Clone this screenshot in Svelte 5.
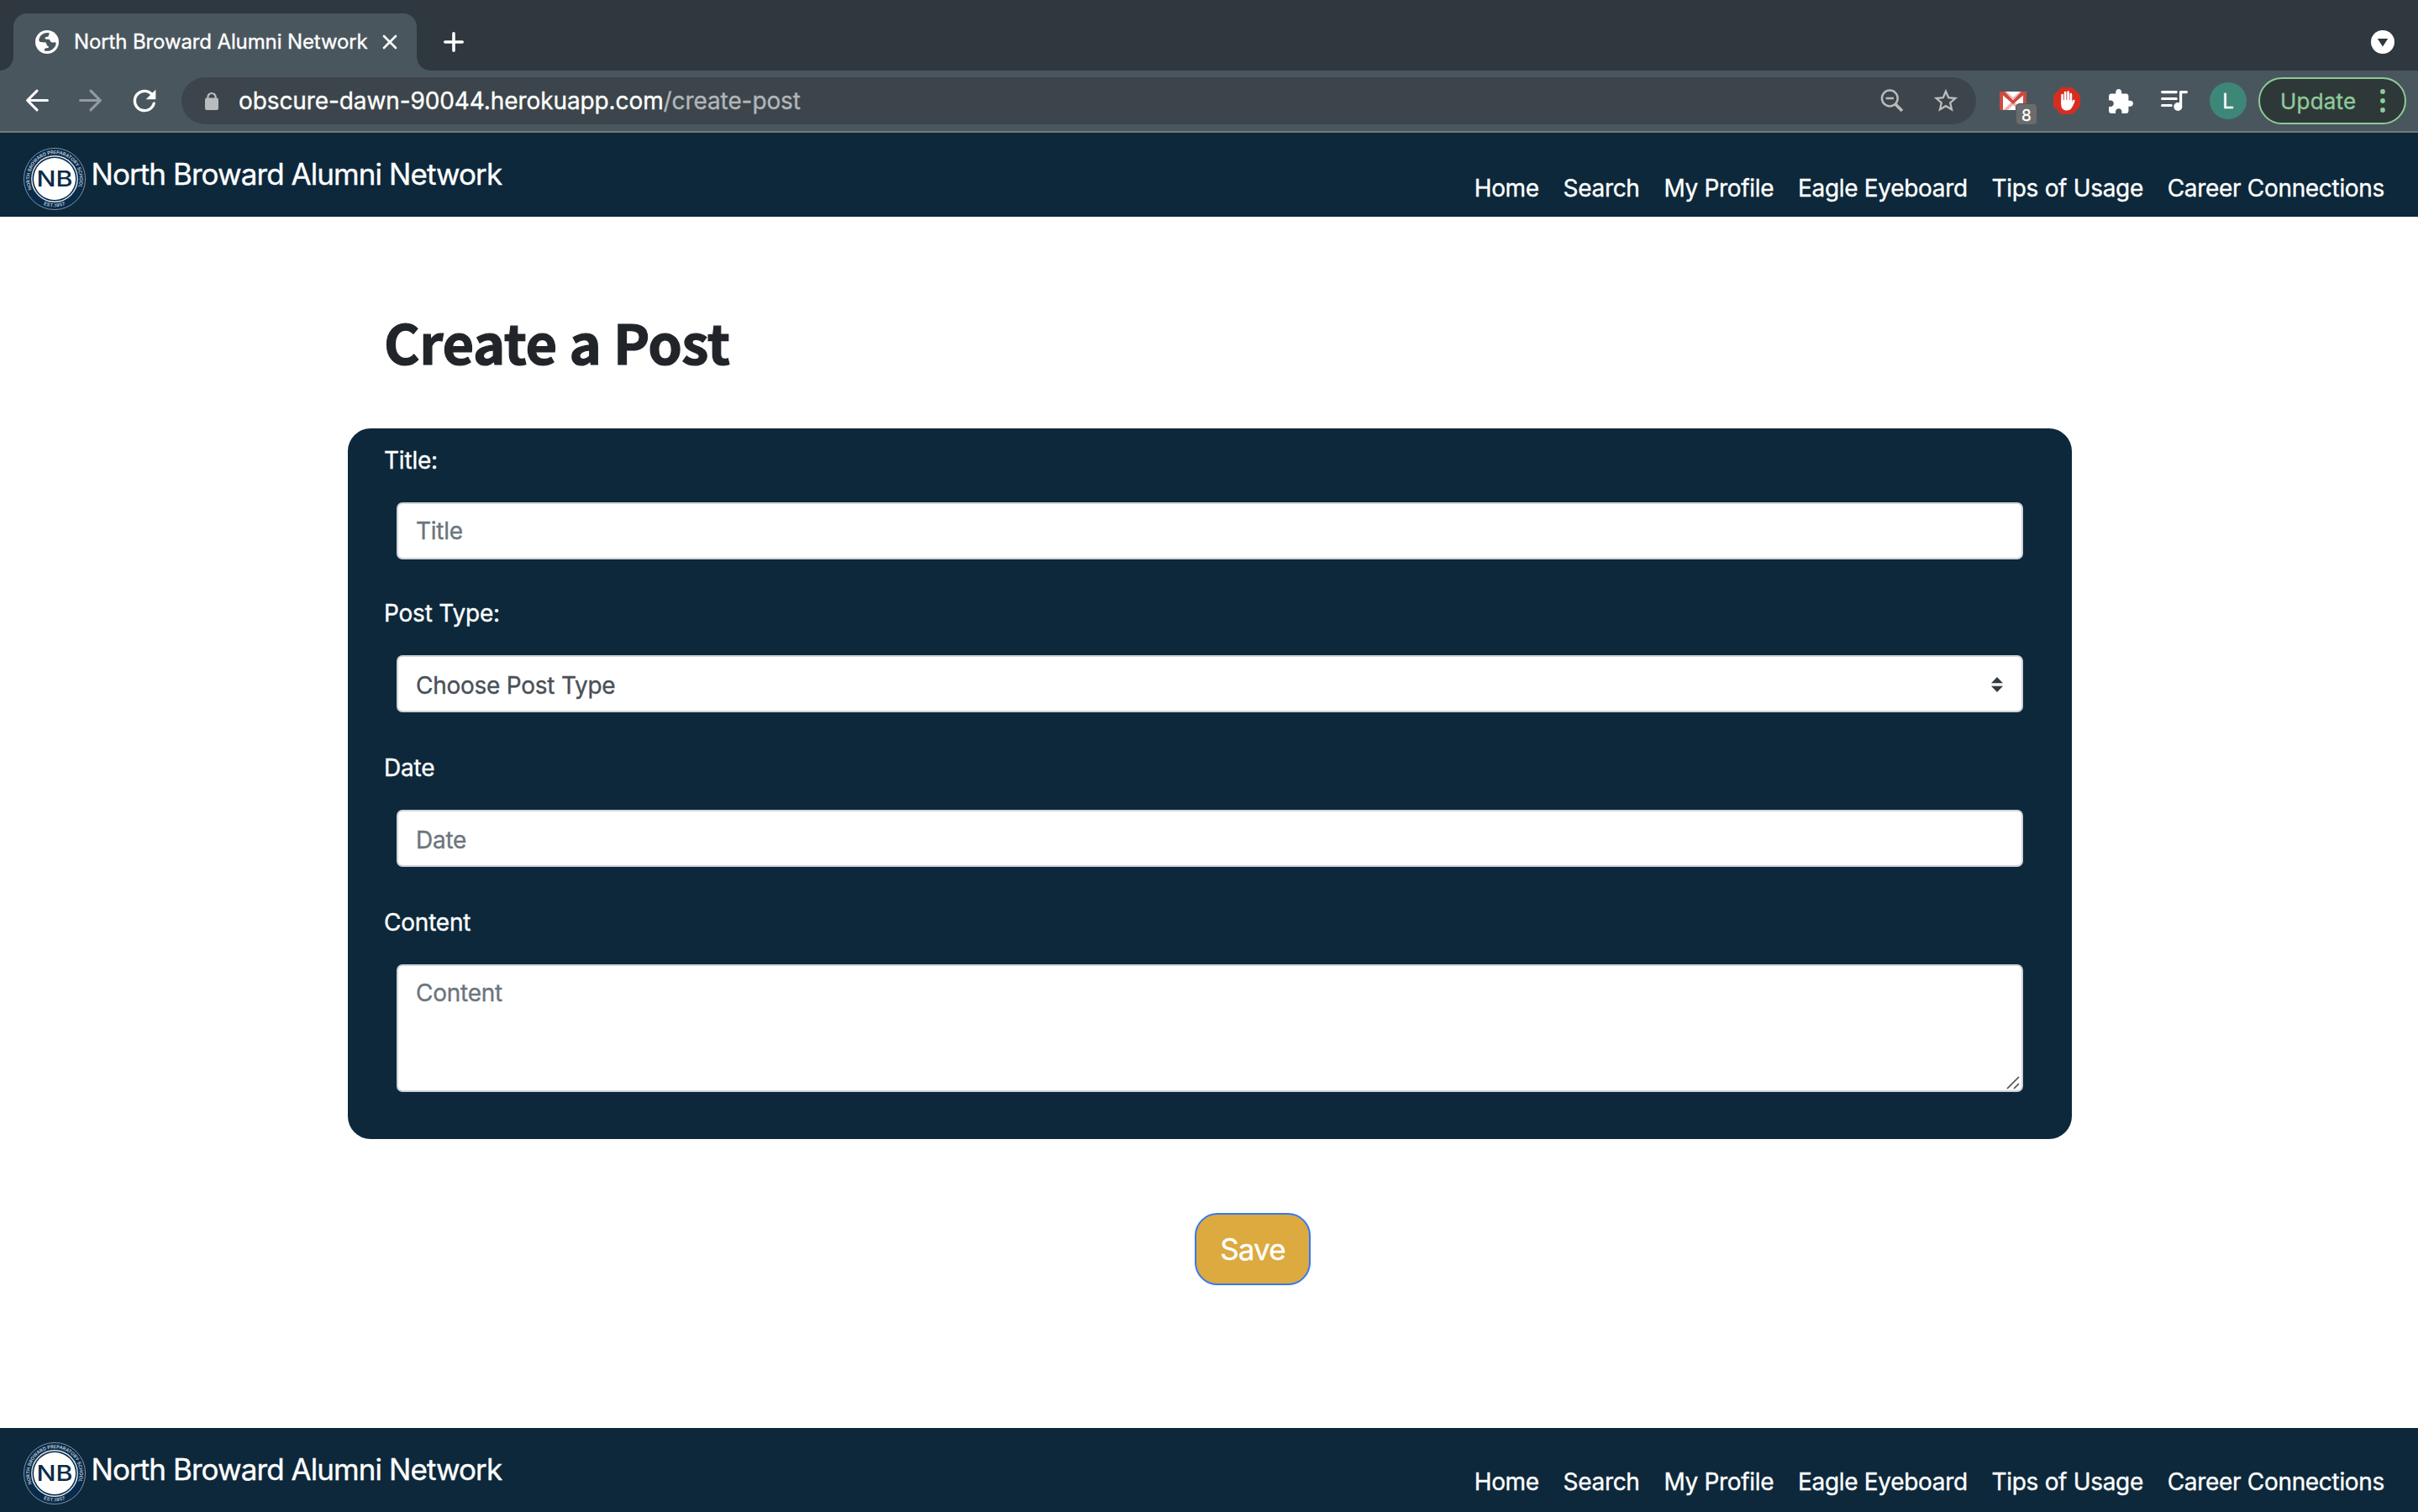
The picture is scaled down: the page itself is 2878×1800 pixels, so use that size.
<script>
  const links = ['Home', 'Search', 'My Profile', 'Eagle Eyeboard', 'Tips of Usage', 'Career Connections'];
</script>

{#snippet siteBar(kind)}
  <nav class="site-bar {kind}">
    <a class="brand" href="#home">
      <svg class="crest" viewBox="-38 -38 76 76" width="76" height="76">
        <defs>
          <path id="ring-top-{kind}" d="M-26.9 12.5A29.7 29.7 0 1 1 26.9 12.5" />
          <path id="ring-bottom-{kind}" d="M-26 21A33.5 33.5 0 0 0 26 21" />
        </defs>
        <circle r="36.6" fill="#082b4b" stroke="#7f919f" stroke-width="1" />
        <circle r="27.2" fill="#082b4b" stroke="#dfe5ea" stroke-width="1.4" />
        <circle r="25" fill="#fff" />
        <text class="ring"><textPath href="#ring-top-{kind}" textLength="116">NORTH BROWARD PREPARATORY SCHOOL</textPath></text>
        <text class="ring est"><textPath href="#ring-bottom-{kind}" startOffset="50%" text-anchor="middle">EST.1957</textPath></text>
        <text class="initials" x="0" y="9.4" text-anchor="middle" textLength="43" lengthAdjust="spacingAndGlyphs">NB</text>
      </svg>
      <span class="brand-name">North Broward Alumni Network</span>
    </a>
    <div class="links">
      {#each links as link}
        <a href="#page">{link}</a>
      {/each}
    </div>
  </nav>
{/snippet}

<div class="window">
  <div class="tab-strip">
    <div class="tab">
      <svg class="favicon" viewBox="-14 -14 28 28" width="28" height="28">
        <circle r="14" fill="#fff" />
        <path d="M2.8-10.8C-3-12-8.6-8.6-9.6-3.2C-10.2-.5-8 .6-5.6.3L-1.8.6C-.6 1.2-.7 2.4-.4 3.4C0 4.8 1.6 4.6 2 5.8C2 7.4.4 7.2-1.6 7.4C-3.4 7.8-3.6 9.4-3 10.4C2 12 8.4 9 10.4 3.4C10.9 1.6 10.6.2 9.6.2C8 .4 6.6 1 5 .2C3.4-.8 3.8-2.4 2.4-3C.8-3.6-1.6-2.8-2.4-4C-3-5.2-1.6-6 .4-6.2C2.6-6.6 1.8-9 2.8-10.8Z" fill="#4a565e" />
      </svg>
      <span class="tab-title">North Broward Alumni Network</span>
      <svg class="tab-close" viewBox="0 0 18 18" width="18" height="18"><path d="M2 2L16 16M16 2L2 16" stroke="#fff" stroke-width="2.6" stroke-linecap="round" /></svg>
      <i class="flare left"></i>
      <i class="flare right"></i>
    </div>
    <svg class="new-tab" viewBox="0 0 24 24" width="24" height="24"><path d="M12 1.8V22.2M1.8 12H22.2" stroke="#fff" stroke-width="3.6" stroke-linecap="round" /></svg>
    <svg class="tab-search" viewBox="-14 -14 28 28" width="28" height="28"><circle r="14" fill="#fff" /><path d="M-6.2-4H6.2L0 5.4Z" fill="#2e383e" /></svg>
  </div>

  <div class="toolbar">
    <span class="slot"><svg viewBox="-18 -18 36 36" width="36" height="36"><path d="M12.4-.5H-11M0-11.8L-11.4-.5L0 10.8" fill="none" stroke="#fff" stroke-width="3.1" stroke-linecap="round" stroke-linejoin="round" /></svg></span>
    <span class="slot"><svg viewBox="-18 -18 36 36" width="36" height="36"><path d="M-12.4-.5H11M0-11.8L11.4-.5L0 10.8" fill="none" stroke="#949b9f" stroke-width="3.1" stroke-linecap="round" stroke-linejoin="round" /></svg></span>
    <span class="slot"><svg viewBox="0 0 24 24" width="40" height="40"><path d="M17.65 6.35A7.95 7.95 0 0 0 12 4a8 8 0 1 0 7.73 10 1 1 0 0 0-1.9-.5A6 6 0 1 1 12 6c1.66 0 3.14.69 4.22 1.78L13 11h7V4z" fill="#fff" /></svg></span>

    <div class="omnibox">
      <span class="slot"><svg viewBox="-18 -18 36 36" width="36" height="36"><rect x="-8" y="-3.4" width="16" height="14.4" rx="2" fill="#b9bcbf" /><path d="M-4.6-2V-4.4A4.6 4.6 0 0 1 4.6-4.4V-2" fill="none" stroke="#b9bcbf" stroke-width="2.2" /></svg></span>
      <span class="url"><span class="host">obscure-dawn-90044.herokuapp.com</span><span class="path">/create-post</span></span>
      <span class="slot"><svg viewBox="-18 -18 36 36" width="36" height="36"><g fill="none" stroke="#b9babc" stroke-width="2.5"><circle cx="-2.7" cy="-3" r="9.4" /><path d="M-7.4-3H2" /><path d="M4 4L12 12" stroke-width="3.8" /></g></svg></span>
      <span class="slot"><svg viewBox="0 0 24 24" width="34" height="34"><path d="M22 9.24l-7.19-.62L12 2 9.19 8.63 2 9.24l5.46 4.73L5.82 21 12 17.27 18.18 21l-1.63-7.03L22 9.24zM12 15.4l-3.76 2.27 1-4.28-3.32-2.88 4.38-.38L12 6.1l1.71 4.04 4.38.38-3.32 2.88 1 4.28L12 15.4z" fill="#bdbebf" /></svg></span>
    </div>

    <div class="extensions">
      <span class="slot mail">
        <svg viewBox="0 0 32 22" width="32" height="22"><rect width="32" height="22" fill="#fff" /><path d="M4 22L16 11L28 22H22L16 16L10 22Z" fill="#edb1ae" /><path d="M5 0H27L16 9.5Z" fill="#f0b9b6" /><path d="M8 0H24L16 7Z" fill="#fff" /><path d="M0 0H6L16 10.2L26 0H32V22H28V4.4L16 15L4 4.4V22H0Z" fill="#cc4a40" /></svg>
        <b class="count">8</b>
      </span>
      <span class="slot">
        <svg viewBox="-16 -16 32 32" width="32" height="32"><path d="M-6.6-16H6.6L16-6.6V6.6L6.6 16H-6.6L-16 6.6V-6.6Z" fill="#d62d20" /><g fill="none" stroke="#fff" stroke-width="2.7" stroke-linecap="round"><path d="M-5.4 3V-6.8M-1.9 1V-9.8M1.6 1V-10.4M4.9 2V-7.8" /></g><path d="M-6.7-1H6.2V2L7-0.2C7.6-1.8 10-1.6 9.5.2C8.6 3.4 7.6 5.6 5.7 8.6C4.3 10.8 2.6 11.5 0 11.5C-4 11.5-6.7 9-6.7 5Z" fill="#fff" /></svg>
      </span>
      <span class="slot"><svg viewBox="0.5 -.5 24 24" width="33" height="33"><path d="M20.5 11H19V7c0-1.1-.9-2-2-2h-4V3.5C13 2.12 11.88 1 10.5 1S8 2.12 8 3.5V5H4c-1.1 0-1.99.9-1.99 2v3.8H3.5c1.49 0 2.7 1.21 2.7 2.7s-1.21 2.7-2.7 2.7H2V20c0 1.1.9 2 2 2h3.8v-1.5c0-1.49 1.21-2.7 2.7-2.7 1.49 0 2.7 1.21 2.7 2.7V22H17c1.1 0 2-.9 2-2v-4h1.5c1.38 0 2.5-1.12 2.5-2.5S21.88 11 20.5 11z" fill="#fff" /></svg></span>
      <span class="slot"><svg viewBox="-18 -18 36 36" width="36" height="36"><g fill="none" stroke="#fff" stroke-width="3.2" stroke-linecap="round"><path d="M-14.4-10.4H2.2M-14.4-2.5H2.2M-14.4 5.5H-3.8" /><path d="M7.6 6V-10.4H14.4" stroke-linejoin="round" /></g><circle cx="4.3" cy="7" r="5" fill="#fff" /></svg></span>
      <span class="slot"><span class="avatar">L</span></span>
    </div>

    <div class="update">
      <span>Update</span>
      <svg viewBox="0 0 6 30" width="6" height="30"><g fill="#8ecb98"><circle cx="3" cy="4" r="2.9" /><circle cx="3" cy="15" r="2.9" /><circle cx="3" cy="26" r="2.9" /></g></svg>
    </div>
  </div>

  {@render siteBar('header')}

  <main>
    <h1>Create a Post</h1>
    <form>
      <label for="title">Title:</label>
      <input id="title" placeholder="Title" />
      <label for="type">Post Type:</label>
      <div class="select" id="type">
        <span>Choose Post Type</span>
        <svg viewBox="0 0 14 18" width="14" height="18"><path d="M7 0L14 7.3H0Z M7 18L14 10.7H0Z" fill="#343a40" /><path d="M0 7.8H14M0 10.2H14" stroke="#ced0d3" /></svg>
      </div>
      <label for="date">Date</label>
      <input id="date" class="low" placeholder="Date" />
      <label for="content">Content</label>
      <div class="area">
        <textarea id="content" placeholder="Content"></textarea>
        <svg class="grip" viewBox="0 0 16 16" width="16" height="16"><path d="M1 15L15 1M9 15L15 9" stroke="#4e4e4e" stroke-width="1.7" /></svg>
      </div>
    </form>
    <button type="button">Save</button>
  </main>

  {@render siteBar('footer')}
</div>

<style>
  :global(body) { margin: 0; background: #fff; }
  .window { width: 2878px; height: 1800px; display: flex; flex-direction: column; overflow: hidden; font-family: Inter, "Liberation Sans", sans-serif; -webkit-text-stroke: 0.35px currentColor; }
  .window * { box-sizing: border-box; }
  svg { display: block; flex: none; }
  svg text { -webkit-text-stroke: 0; }
  a { color: inherit; text-decoration: none; }

  .tab-strip { height: 84px; flex: none; background: #2e383e; display: flex; align-items: flex-end; padding: 0 28px 0 16px; }
  .tab { position: relative; width: 480px; height: 68px; border-radius: 16px 16px 0 0; background: #4a565e; display: flex; align-items: center; padding-left: 26px; color: #fff; }
  .tab-title { width: 350px; margin-left: 18px; font-size: 24px; line-height: 30px; letter-spacing: -0.12px; white-space: nowrap; }
  .tab-close { margin-left: 17px; }
  .flare { position: absolute; bottom: 0; width: 16px; height: 16px; }
  .flare.left { left: -16px; background: radial-gradient(circle at 0 0, transparent 15.5px, #4a565e 16px); }
  .flare.right { right: -16px; background: radial-gradient(circle at 100% 0, transparent 15.5px, #4a565e 16px); }
  .new-tab { margin: 0 0 22px 32px; }
  .tab-search { margin: 0 0 20px auto; }

  .toolbar { height: 74px; flex: none; background: #4a565e; border-bottom: 2px solid #6e7a81; display: flex; align-items: center; padding: 0 14px 0 12px; }
  .slot { width: 64px; height: 56px; flex: none; display: flex; align-items: center; justify-content: center; }
  .omnibox { flex: 1; height: 56px; margin: 0 12px; padding: 0 4px; border-radius: 28px; background: #3c454b; display: flex; align-items: center; }
  .url { flex: 1; font-size: 28px; line-height: 40px; letter-spacing: -0.1px; white-space: nowrap; }
  .host { color: #fff; }
  .path { color: #b2b6b9; }
  .extensions { display: flex; }
  .mail { position: relative; }
  .count { position: absolute; left: 36px; top: 32px; width: 24px; height: 24px; border-radius: 4px; background: #6b6b6b; box-shadow: 0 0 0 1px #4a565e; color: #fff; font-size: 19px; font-weight: 400; line-height: 27px; text-align: center; }
  .avatar { width: 44px; height: 44px; border-radius: 50%; background: #3d8779; color: #fff; font-size: 24px; line-height: 45px; text-align: center; }
  .update { width: 176px; height: 56px; margin-left: 4px; border: 2px solid #8ecb98; border-radius: 28px; background: #2e3838; display: flex; align-items: center; justify-content: space-between; padding: 0 23px 0 24px; color: #8ecb98; font-size: 26px; line-height: 40px; letter-spacing: 0.2px; }
  .update span { padding-top: 1px; }

  .site-bar { height: 100px; flex: none; display: flex; justify-content: space-between; align-items: flex-start; background: #0d283b; color: #fff; padding: 0 40px 0 27px; }
  .brand { display: flex; align-items: flex-start; }
  .crest { margin-top: 17px; }
  .footer .crest { margin-top: 16px; }
  .brand-name { margin: 29px 0 0 5.5px; font-size: 35px; line-height: 40px; letter-spacing: -0.93px; white-space: nowrap; }
  .ring { fill: #c3ced7; font: 600 5.6px Inter, sans-serif; }
  .est { letter-spacing: 0.3px; }
  .initials { fill: #0d2c48; font: 500 25px Inter, sans-serif; }
  .links { display: flex; gap: 28.8px; margin-top: 46px; font-size: 28px; line-height: 40px; letter-spacing: -0.32px; white-space: nowrap; }
  .footer .links { margin-top: 44px; }

  main { height: 1442px; flex: none; display: flex; flex-direction: column; align-items: flex-start; padding: 100px 412px 0 414px; }
  h1 { margin: 0 0 0 43px; height: 96px; font: bold 65px/96px "Noto Sans CJK JP", "Noto Sans", sans-serif; letter-spacing: -0.35px; color: #212529; -webkit-text-stroke: 1.2px currentColor; }
  form { width: 2052px; height: 846px; margin-top: 56px; border-radius: 27px; background: #0d283b; padding: 18px 58px 0 43px; display: flex; flex-direction: column; color: #fff; font-size: 28px; letter-spacing: -0.2px; }
  label { line-height: 40px; margin-bottom: 30px; }
  input, .select, textarea { display: block; width: 1936px; height: 68px; margin: 0 0 46px 15px; border: 2px solid #ced4da; border-radius: 7px; background: #fff; padding: 0 22px 0 21px; font: 28px Inter, sans-serif; letter-spacing: -0.25px; color: #495057; outline: none; }
  #title { margin-bottom: 44px; }
  input.low { padding-top: 3px; }
  input::placeholder, textarea::placeholder { color: #6c757d; opacity: 1; }
  .select { display: flex; align-items: center; justify-content: space-between; line-height: 40px; }
  .select span { padding-top: 3px; }
  .select svg { margin-top: 2px; }
  .area { position: relative; width: 1951px; }
  textarea { height: 152px; margin-bottom: 0; padding-top: 12px; line-height: 40px; resize: none; }
  .grip { position: absolute; right: 4px; bottom: 3px; }
  button { width: 138px; height: 86px; margin: 88px 0 0 1008px; padding: 0; border: 2px solid #3478f6; border-radius: 27px; background: #dcaa3f; color: #fff; font: 35px/40px Inter, sans-serif; letter-spacing: -0.9px; }
</style>
